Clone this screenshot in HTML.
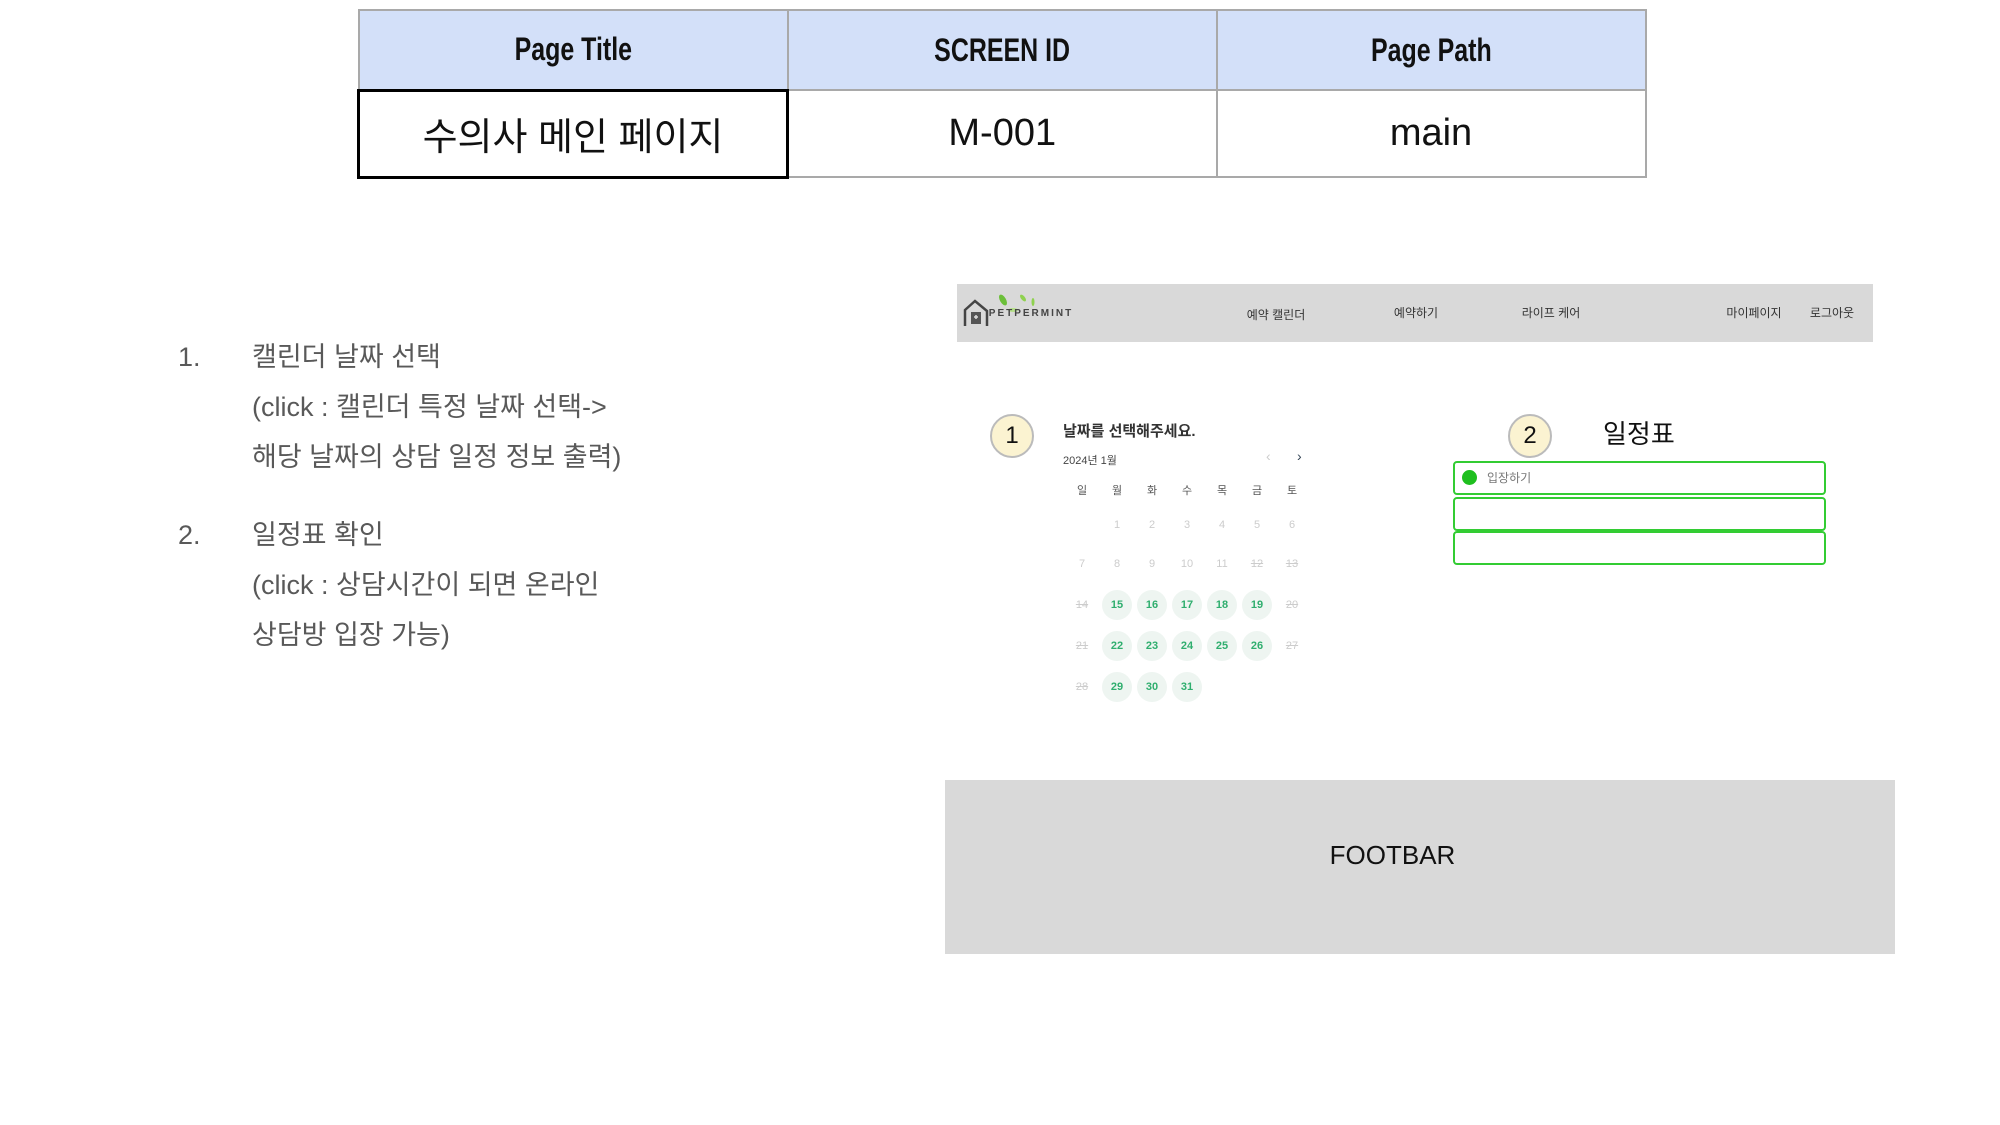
<!DOCTYPE html>
<html><head><meta charset="utf-8">
<style>
*{margin:0;padding:0;box-sizing:border-box}
body{width:2000px;height:1125px;background:#fff;position:relative;overflow:hidden;font-family:"Liberation Sans","Noto Sans CJK KR",sans-serif}
.abs{position:absolute}
table{position:absolute;left:357px;top:9px;border-collapse:collapse}
td{text-align:center;border:2px solid #a9a9a9}
.h td{height:80px;background:#d3e0f9;font-weight:bold;font-size:32px;color:#111}
.h td span{display:inline-block;transform:scaleX(0.78)}
.b td{height:87px;font-size:38px;color:#111}
.b td.first{border:3px solid #000}
.list{color:#595959;font-size:27px;line-height:50px}
.nav{left:957px;top:284px;width:916px;height:58px;background:#d9d9d9}
.nav span{position:absolute;top:20px;font-size:12px;color:#333;transform:translateX(-50%);white-space:nowrap}
.circ{width:44px;height:44px;border-radius:50%;background:#fbf3d1;border:2px solid #bbb;font-size:24px;text-align:center;line-height:40px;color:#111}
.cal span{position:absolute;width:30px;height:30px;line-height:30px;text-align:center;font-size:11px;transform:translate(-50%,-50%);color:#ccc}
.cal span.g{background:#eef5f1;border-radius:50%;color:#2fae6e;font-weight:bold}
.cal span.w{color:#555}
.cal span.s{text-decoration:line-through}
.box{left:1453px;width:373px;height:34px;border:2px solid #3c3;border-radius:4px}
</style></head><body>
<table>
<tr class="h"><td style="width:429px"><span>Page Title</span></td><td style="width:429px"><span>SCREEN ID</span></td><td style="width:429px"><span>Page Path</span></td></tr>
<tr class="b"><td class="first">수의사 메인 페이지</td><td>M-001</td><td>main</td></tr>
</table>

<div class="abs list" style="left:178px;top:332px">1.</div>
<div class="abs list" style="left:252px;top:332px">캘린더 날짜 선택<br>(click : 캘린더 특정 날짜 선택-&gt;<br>해당 날짜의 상담 일정 정보 출력)</div>
<div class="abs list" style="left:178px;top:510px">2.</div>
<div class="abs list" style="left:252px;top:510px">일정표 확인<br>(click : 상담시간이 되면 온라인<br>상담방 입장 가능)</div>

<div class="abs nav">
 <svg class="abs" style="left:6px;top:14px" width="30" height="30" viewBox="0 0 30 30"><path d="M2 28 L2 12 L12 3 L24 13 L24 28" fill="none" stroke="#444" stroke-width="2.5"/><rect x="8" y="14" width="10" height="12" fill="#555"/><path d="M11 19h4M13 17v4" stroke="#ddd" stroke-width="1.5"/></svg>
 <svg class="abs" style="left:36px;top:8px" width="60" height="24" viewBox="0 0 60 24"><ellipse cx="10" cy="8" rx="3" ry="6" fill="#6cbf3a" transform="rotate(-30 10 8)"/><ellipse cx="30" cy="6" rx="2" ry="4" fill="#8fd14f" transform="rotate(-40 30 6)"/><ellipse cx="40" cy="10" rx="1.5" ry="4" fill="#8fd14f"/><ellipse cx="20" cy="18" rx="5" ry="2" fill="#b6e08a"/></svg>
 <span style="left:74px;top:24px;font-size:10px;font-weight:bold;letter-spacing:2px;color:#444">PETPERMINT</span>
 <span style="left:319px;top:22px">예약 캘린더</span>
 <span style="left:459px">예약하기</span>
 <span style="left:594px">라이프 케어</span>
 <span style="left:797px">마이페이지</span>
 <span style="left:875px">로그아웃</span>
</div>

<div class="abs circ" style="left:990px;top:414px">1</div>
<div class="abs circ" style="left:1508px;top:414px">2</div>
<div class="abs" style="left:1063px;top:420px;font-size:15px;font-weight:bold;color:#333">날짜를 선택해주세요.</div>
<div class="abs" style="left:1063px;top:452px;font-size:11px;color:#444">2024년 1월</div>
<div class="abs" style="left:1266px;top:448px;font-size:14px;color:#ccc">‹</div>
<div class="abs" style="left:1297px;top:448px;font-size:14px;color:#345">›</div>
<div class="cal" id="cal"></div>
<script>
var xs=[1082,1117,1152,1187,1222,1257,1292],ys=[525,564,605,646,687],h='',c=document.getElementById('cal');
'일 월 화 수 목 금 토'.split(' ').forEach(function(d,i){h+='<span class="w" style="left:'+xs[i]+'px;top:491px">'+d+'</span>'});
for(var d=1;d<=31;d++){var col=d%7,row=Math.floor(d/7);var cls='';if(d>=15&&col>=1&&col<=5)cls='g';else if(d>=12&&(col==0||col==6||d==12))cls='s';
h+='<span class="'+cls+'" style="left:'+xs[col]+'px;top:'+ys[row]+'px">'+d+'</span>';}
c.innerHTML=h;
</script>

<div class="abs" style="left:1603px;top:414px;font-size:26px;color:#111">일정표</div>
<div class="abs box" style="top:461px"></div>
<div class="abs box" style="top:497px"></div>
<div class="abs box" style="top:531px"></div>
<div class="abs" style="left:1462px;top:470px;width:15px;height:15px;border-radius:50%;background:#1fbf1f"></div>
<div class="abs" style="left:1487px;top:469px;font-size:12px;color:#777">입장하기</div>

<div class="abs" style="left:945px;top:780px;width:950px;height:174px;background:#d9d9d9"></div>
<div class="abs" style="left:945px;top:840px;width:895px;text-align:center;font-size:26px;color:#111">FOOTBAR</div>
</body></html>
